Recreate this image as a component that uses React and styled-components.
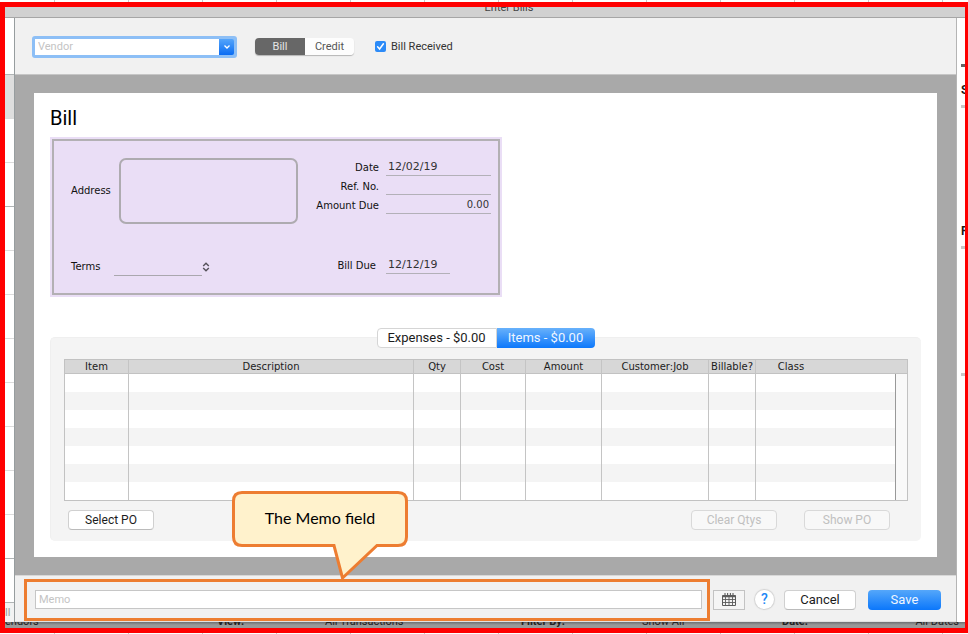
import React, { useState } from 'react';
import styled, { createGlobalStyle, css } from 'styled-components';

const LABEL_FONT = '"DejaVu Sans", "Open Sans", sans-serif';
const UI_FONT = 'Roboto, "Liberation Sans", sans-serif';

const GlobalStyle = createGlobalStyle`
  *, *::before, *::after {
    box-sizing: border-box;
  }
  body {
    margin: 0;
    font-family: ${UI_FONT};
    color: #1c1c1c;
    background: #fff;
  }
  button, input, select, textarea {
    margin: 0;
    padding: 0;
    border: 0;
    border-radius: 0;
    font: inherit;
    color: inherit;
    background: none;
    outline: none;
  }
`;

/* spreadsheet grid peeking out above and below the frame */
const Sheet = styled.div`
  min-height: 100vh;
  display: flex;
  flex-direction: column;
  padding: 2px 0 1px;
  background: repeating-linear-gradient(to right, #fff 0, #fff 54px, #c8c8c8 54px, #c8c8c8 55px, #fff 55px, #fff 74px);
`;

const Frame = styled.div`
  flex: 1;
  display: flex;
  flex-direction: column;
  border: 5px solid #ff0000;
  border-right-width: 3px;
  background: #fff;
`;

const TitleBar = styled.header`
  height: 11px;
  display: flex;
  align-items: flex-end;
  justify-content: center;
  padding: 0 0 3px 48px;
  overflow: hidden;
  font-size: 11px;
  line-height: 12px;
  color: #444;
  background: #d1d1d1;
  border-bottom: 1px solid #a6a6a6;
`;

const Body = styled.div`
  flex: 1;
  display: flex;
`;

/* left list of the window behind */
const ListStrip = styled.aside`
  width: 10px;
  display: flex;
  flex-direction: column;
  border-right: 1px solid #979d9f;
  background: #fff;
`;

const ListCell = styled.div`
  height: ${p => p.$height || 44}px;
  border-bottom: 1px solid ${p => (p.$dark ? '#b0b4b5' : '#dcdcdc')};
  background: ${p => p.$fill || '#fff'};
`;

const ListFoot = styled.div`
  flex: 1;
  background: #f3f3f3;
  font-size: 11px;
  line-height: 19px;
  color: #999;
  overflow: hidden;
`;

const SideStrip = styled.aside`
  width: 9px;
  padding: 46px 0 0 4px;
  overflow: hidden;
  border-left: 1px solid #b5b5b5;
  background: #fff;
  font-size: 12px;
  font-weight: bold;
  line-height: 14px;
`;

const Dash = styled.div`
  height: 3px;
  margin-bottom: ${p => p.$after || 0}px;
  background: ${p => (p.$dark ? '#666' : '#c9c9c9')};
`;

const Initial = styled.div`
  height: 14px;
  margin-bottom: 8px;
`;

const Dialog = styled.main`
  flex: 1;
  min-width: 0;
  display: flex;
  flex-direction: column;
  background: #f1f1f1;
`;

const Toolbar = styled.div`
  height: 57px;
  display: flex;
  align-items: center;
  padding: 1px 17px 0;
  border-bottom: 1px solid #c6c6c6;
  font-size: 11px;
`;

const Combo = styled.div`
  width: 205px;
  height: 22px;
  display: flex;
  padding: 3px;
  border-radius: 3px;
  background: #8dbff6;
  input {
    flex: 1;
    min-width: 0;
    padding: 0 3px;
    background: #fff;
  }
  input::placeholder {
    color: #c4c4c4;
    opacity: 1;
  }
  button {
    width: 15px;
    display: flex;
    align-items: center;
    justify-content: center;
    border-radius: 0 2px 2px 0;
    background: linear-gradient(#55a5fa, #0a6cf3);
  }
`;

const Segmented = styled.div`
  display: flex;
  margin: 0 21px 0 18px;
  border-radius: 4px;
  box-shadow: 0 1px 1px rgba(0, 0, 0, 0.25);
`;

const Segment = styled.button`
  width: ${p => p.$width}px;
  height: 17px;
  line-height: 17px;
  color: ${p => (p.$active ? '#e6e6e6' : '#555')};
  background: ${p => (p.$active ? '#676767' : '#fdfdfd')};
  &:first-child {
    border-radius: 4px 0 0 4px;
  }
  &:last-child {
    border-radius: 0 4px 4px 0;
  }
`;

const CheckLabel = styled.label`
  display: flex;
  align-items: center;
  gap: 5px;
  color: #333;
`;

const Checkbox = styled.input`
  appearance: none;
  width: 11px;
  height: 11px;
  border-radius: 2px;
  background: #fff;
  border: 1px solid #bbb;
  &:checked {
    border: 0;
    background: #2c8bf8 url("data:image/svg+xml,%3Csvg xmlns='http://www.w3.org/2000/svg' viewBox='0 0 11 11'%3E%3Cpath d='M2.6 5.8 4.6 8 8.4 2.8' fill='none' stroke='white' stroke-width='1.5' stroke-linecap='round'/%3E%3C/svg%3E");
  }
`;

const Desk = styled.div`
  flex: 1;
  display: flex;
  padding: 18px 19px;
  background: #a9a9a9;
`;

const Paper = styled.section`
  flex: 1;
  min-width: 0;
  padding: 13px 16px 16px;
  background: #fff;
`;

const Heading = styled.h1`
  margin: 0 0 7px;
  font-size: 20px;
  line-height: 24px;
  font-weight: 400;
  color: #000;
`;

const Voucher = styled.div`
  width: 452px;
  padding: 2px;
  background: #eadef6;
`;

const VoucherInner = styled.div`
  height: 156px;
  display: flex;
  justify-content: space-between;
  padding: 16px 7px 0 17px;
  border: 2px solid #b3b0b4;
  font-family: ${LABEL_FONT};
  font-size: 10px;
  line-height: 20px;
  color: #111;
`;

const AddressRow = styled.div`
  display: grid;
  grid-template-columns: 48px 179px;
  align-items: center;
  margin-top: 1px;
  textarea {
    height: 66px;
    padding: 6px;
    resize: none;
    border: 2px solid #aeabb0;
    border-radius: 7px;
  }
`;

const TermsRow = styled.div`
  display: grid;
  grid-template-columns: 43px 96px;
  margin-top: 33px;
`;

const TermsPicker = styled.div`
  height: 19px;
  display: grid;
  align-items: center;
  justify-items: end;
  select {
    grid-area: 1 / 1;
    appearance: none;
    width: 100%;
    height: 19px;
    background: linear-gradient(#aaa7ae, #aaa7ae) left bottom / 88px 1px no-repeat;
  }
  svg {
    grid-area: 1 / 1;
    pointer-events: none;
  }
`;

const FieldRow = styled.div`
  height: 19px;
  display: grid;
  grid-template-columns: 81px 105px;
  column-gap: 7px;
  margin-top: ${p => p.$gap || 0}px;
  label {
    line-height: 22px;
    text-align: right;
    padding-right: ${p => p.$inset || 0}px;
  }
  input {
    width: ${p => p.$width || 105}px;
    height: 19px;
    padding: 2px 2px 0;
    border-bottom: 1px solid #b3b0b8;
    font-size: ${p => p.$size || 11}px;
    color: #333;
    text-align: ${p => p.$align || 'left'};
  }
`;

const Tabs = styled.div`
  position: relative;
  z-index: 1;
  display: flex;
  justify-content: center;
  margin-top: 31px;
`;

const Tab = styled.button`
  width: ${p => p.$width}px;
  height: 20px;
  font-size: 13px;
  line-height: 18px;
  background: #fff;
  border: 1px solid #d5d5d5;
  border-radius: 4px 0 0 4px;
  & + & {
    border-radius: 0 4px 4px 0;
  }
  ${p => p.$active && css`
    color: #f0f6ff;
    border: 0;
    background: linear-gradient(#68b1fb, #0d78fb);
  `}
`;

const Panel = styled.div`
  margin-top: -11px;
  padding: 21px 13px 11px;
  border: 1px solid #efefef;
  border-width: 1px 0 0 1px;
  border-radius: 5px;
  background: #f4f4f4;
`;

const ItemTable = styled.table`
  width: 100%;
  table-layout: fixed;
  border-collapse: separate;
  border-spacing: 0;
  border: 1px solid #c2c2c2;
  font-family: ${LABEL_FONT};
  font-size: 10px;
  background: #fff;
  th, td {
    padding: 0;
    border-right: 1px solid #c4c4c4;
  }
  th {
    height: 14px;
    line-height: 13px;
    font-weight: 400;
    white-space: nowrap;
    background: #d7d7d7;
    border-bottom: 1px solid #c2c2c2;
  }
  th:last-child {
    padding-right: 81px;
    border-right: 0;
  }
  td {
    height: 18px;
  }
  td:nth-last-child(2) {
    border-right-color: #999;
  }
  tr:nth-child(even) td {
    background: #f4f4f4;
  }
  td:last-child, tr:nth-child(even) td:last-child {
    border-right: 0;
    background: #f9f9f9;
  }
`;

const Actions = styled.div`
  display: flex;
  gap: 27px;
  margin-top: 9px;
  padding: 0 18px 0 4px;
`;

const PushButton = styled.button`
  width: ${p => p.$width}px;
  height: 20px;
  font-size: ${p => p.$size || 12}px;
  line-height: 18px;
  border: 1px solid #d0d0d0;
  border-bottom-color: #bbb;
  border-radius: 4px;
  background: #fff;
  &:disabled {
    color: #c0c0c0;
    background: #f8f8f8;
    border-color: #d9d9d9;
  }
  ${p => p.$primary && css`
    color: #eef5ff;
    border: 0;
    background: linear-gradient(#55a7fa, #0b77fb);
  `}
`;

const SelectButton = styled(PushButton)`
  margin-right: auto;
`;

const Footer = styled.footer`
  height: 47px;
  display: flex;
  align-items: center;
  padding: 2px 15px 0 9px;
  border-top: 1px solid #d8d8d8;
  border-bottom: 1px solid #e2e2e2;
`;

const MemoHighlight = styled.div`
  position: relative;
  flex: 1;
  min-width: 0;
  height: 42px;
  display: flex;
  align-items: center;
  margin-right: 3px;
  padding: 0 5px 0 8px;
  border: 3px solid #ed7d31;
`;

const MemoInput = styled.input`
  flex: 1;
  min-width: 0;
  height: 19px;
  padding: 0 3px;
  font-size: 11px;
  border: 1px solid #c6c6c6;
  background: #fff;
  &::placeholder {
    color: #c4c4c4;
    opacity: 1;
  }
`;

const Callout = styled.div`
  position: absolute;
  left: 205px;
  bottom: 37px;
  width: 176px;
  height: 90px;
  svg {
    position: absolute;
    inset: 0;
  }
  p {
    position: relative;
    margin: 0;
    font-family: Lato, "Open Sans", sans-serif;
    font-size: 16px;
    line-height: 54px;
    text-align: center;
    color: #000;
  }
`;

const CalendarButton = styled.button`
  width: 32px;
  height: 20px;
  display: flex;
  align-items: center;
  justify-content: center;
  border: 1px solid #c3c3c3;
  background: #f5f5f5;
`;

const HelpButton = styled.button`
  width: 19px;
  height: 19px;
  margin: 0 10px;
  font-size: 14px;
  font-weight: 500;
  line-height: 19px;
  color: #1c86f5;
  border-radius: 50%;
  background: #fff;
  box-shadow: 0 0 1px 1px #d2d2d2;
`;

const FooterButtons = styled.div`
  display: flex;
  gap: 12px;
`;

/* filter bar of the window behind, only a sliver of it shows */
const BackBar = styled.div`
  height: 6px;
  display: grid;
  grid-template-columns: 212px 108px 196px 121px 140px 110px 1fr;
  align-content: end;
  padding-right: 6px;
  overflow: hidden;
  font-size: 11px;
  line-height: 12px;
  color: #222;
  background: linear-gradient(#6e7072, #999 3px);
  b {
    font-weight: 700;
  }
  span:last-child {
    text-align: right;
  }
`;

const COLUMNS = [
  { name: 'Item', width: 64 },
  { name: 'Description' },
  { name: 'Qty', width: 47 },
  { name: 'Cost', width: 65 },
  { name: 'Amount', width: 76 },
  { name: 'Customer:Job', width: 107 },
  { name: 'Billable?', width: 47 },
  { name: 'Class', width: 140 },
];

const ROWS = [1, 2, 3, 4, 5, 6, 7];
const LIST_CELLS = [1, 2, 3, 4, 5, 6, 7, 8, 9, 10];

const ChevronDown = () => (
  <svg width="8" height="6" viewBox="0 0 8 6" fill="none" stroke="#fff" strokeWidth="1.3">
    <path d="M1.5 1.5 4 4l2.5-2.5" />
  </svg>
);

const UpDown = () => (
  <svg width="8" height="10" viewBox="0 0 8 10" fill="none" stroke="#55515a" strokeWidth="1.4">
    <path d="M1.2 4 4 1.2 6.8 4M1.2 6 4 8.8 6.8 6" />
  </svg>
);

const CalendarIcon = () => (
  <svg width="14" height="13" viewBox="0 0 14 13" fill="none" stroke="#5c5c5c">
    <path d="M.5 2.5h13v10H.5z" />
    <path d="M0 3.5h14" strokeWidth="1.5" />
    <path d="M0 6.5h14M0 9.5h14M3.5 4v8M7 4v8M10.5 4v8" strokeWidth=".9" />
    <path d="M3 0v3M5.6 0v3M8.4 0v3M11 0v3" strokeWidth="1.1" />
  </svg>
);

const BillVoucher = () => (
  <Voucher>
    <VoucherInner>
      <div>
        <AddressRow>
          <label htmlFor="address">Address</label>
          <textarea id="address" />
        </AddressRow>
        <TermsRow>
          <label htmlFor="terms">Terms</label>
          <TermsPicker>
            <select id="terms"><option value="" /></select>
            <UpDown />
          </TermsPicker>
        </TermsRow>
      </div>
      <div>
        <FieldRow>
          <label htmlFor="date">Date</label>
          <input id="date" defaultValue="12/02/19" />
        </FieldRow>
        <FieldRow>
          <label htmlFor="ref">Ref. No.</label>
          <input id="ref" />
        </FieldRow>
        <FieldRow $align="right" $size={10}>
          <label htmlFor="amount">Amount Due</label>
          <input id="amount" defaultValue="0.00" />
        </FieldRow>
        <FieldRow $gap={41} $width={64} $inset={3}>
          <label htmlFor="due">Bill Due</label>
          <input id="due" defaultValue="12/12/19" />
        </FieldRow>
      </div>
    </VoucherInner>
  </Voucher>
);

const LineItems = () => (
  <ItemTable>
    <colgroup>
      {COLUMNS.map(c => <col key={c.name} width={c.width} />)}
      <col width="11" />
    </colgroup>
    <thead>
      <tr>
        {COLUMNS.map(c => (
          <th key={c.name} colSpan={c.name === 'Class' ? 2 : 1}>{c.name}</th>
        ))}
      </tr>
    </thead>
    <tbody>
      {ROWS.map(row => (
        <tr key={row}>
          {COLUMNS.map(c => <td key={c.name} />)}
          <td />
        </tr>
      ))}
    </tbody>
  </ItemTable>
);

const App = () => {
  const [kind, setKind] = useState('bill');
  const [tab, setTab] = useState('items');
  const [received, setReceived] = useState(true);

  return (
    <Sheet>
      <GlobalStyle />
      <Frame>
        <TitleBar>Enter Bills</TitleBar>
        <Body>
          <ListStrip>
            <ListCell $height={57} $dark />
            <ListCell $fill="#dedede" />
            {LIST_CELLS.map(n => <ListCell key={n} $dark={n === 2 || n === 10} />)}
            <ListCell $dark />
            <ListFoot>ll</ListFoot>
          </ListStrip>
          <Dialog>
            <Toolbar>
              <Combo>
                <input placeholder="Vendor" aria-label="Vendor" />
                <button aria-label="Show vendors"><ChevronDown /></button>
              </Combo>
              <Segmented>
                <Segment $width={50} $active={kind === 'bill'} onClick={() => setKind('bill')}>Bill</Segment>
                <Segment $width={49} $active={kind === 'credit'} onClick={() => setKind('credit')}>Credit</Segment>
              </Segmented>
              <CheckLabel>
                <Checkbox type="checkbox" checked={received} onChange={e => setReceived(e.target.checked)} />
                Bill Received
              </CheckLabel>
            </Toolbar>
            <Desk>
              <Paper>
                <Heading>Bill</Heading>
                <BillVoucher />
                <Tabs role="tablist">
                  <Tab role="tab" $width={120} $active={tab === 'expenses'} onClick={() => setTab('expenses')}>Expenses - $0.00</Tab>
                  <Tab role="tab" $width={98} $active={tab === 'items'} onClick={() => setTab('items')}>Items - $0.00</Tab>
                </Tabs>
                <Panel>
                  <LineItems />
                  <Actions>
                    <SelectButton $width={86}>Select PO</SelectButton>
                    <PushButton $width={86} disabled>Clear Qtys</PushButton>
                    <PushButton $width={86} disabled>Show PO</PushButton>
                  </Actions>
                </Panel>
              </Paper>
            </Desk>
            <Footer>
              <MemoHighlight>
                <MemoInput placeholder="Memo" aria-label="Memo" />
                <Callout>
                  <svg width="176" height="90" viewBox="0 0 176 90" fill="#fff2cc" stroke="#ed7d31" strokeWidth="3">
                    <path d="M10 1.5H166Q174.5 1.5 174.5 10V46Q174.5 54.5 166 54.5H145L110.5 87 102 54.5H10Q1.5 54.5 1.5 46V10Q1.5 1.5 10 1.5Z" />
                  </svg>
                  <p>The Memo field</p>
                </Callout>
              </MemoHighlight>
              <CalendarButton aria-label="Calendar"><CalendarIcon /></CalendarButton>
              <HelpButton>?</HelpButton>
              <FooterButtons>
                <PushButton $width={72} $size={13}>Cancel</PushButton>
                <PushButton $width={73} $size={13} $primary>Save</PushButton>
              </FooterButtons>
            </Footer>
          </Dialog>
          <SideStrip>
            <Dash $dark $after={16} />
            <Initial>S</Initial>
            <Dash $after={116} />
            <Initial>F</Initial>
            <Dash $after={124} />
            <Dash />
          </SideStrip>
        </Body>
        <BackBar>
          <span>endors</span>
          <b>View:</b>
          <span>All Transactions</span>
          <b>Filter By:</b>
          <span>Show All</span>
          <b>Date:</b>
          <span>All Dates</span>
        </BackBar>
      </Frame>
    </Sheet>
  );
};

export default App;
